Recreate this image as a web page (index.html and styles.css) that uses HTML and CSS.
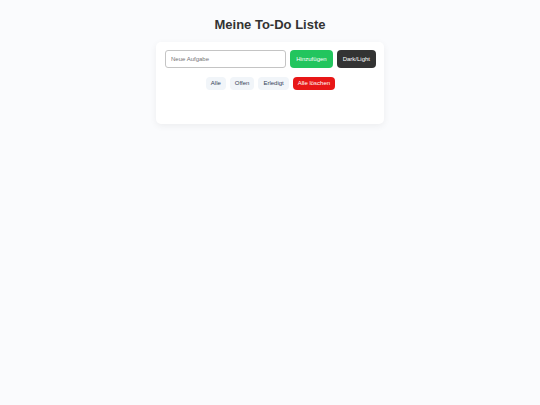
FILE: index.html
```html
<!DOCTYPE html>
<html lang="de">
<head>
<meta charset="utf-8">
<meta name="viewport" content="width=device-width, initial-scale=1">
<title>Meine To-Do Liste</title>
<link rel="stylesheet" href="styles.css">
</head>
<body>
<h1 class="title">Meine To-Do Liste</h1>
<main class="card">
  <form class="entry">
    <input class="entry-input" type="text" placeholder="Neue Aufgabe" aria-label="Neue Aufgabe">
    <button class="button add" type="submit">Hinzufügen</button>
    <button class="button theme" type="button">Dark/Light</button>
  </form>
  <div class="filters">
    <button class="filter" type="button">Alle</button>
    <button class="filter" type="button">Offen</button>
    <button class="filter" type="button">Erledigt</button>
    <button class="filter clear" type="button">Alle löschen</button>
  </div>
  <ul class="tasks"></ul>
</main>
</body>
</html>
```
FILE: styles.css
```css
* {
  box-sizing: border-box;
}

body {
  margin: 0;
  padding: 17px 16px;
  background: #fafbfd;
  color: #333;
  font-family: "Liberation Sans", Arial, sans-serif;
}

.title {
  margin: 0 0 9px;
  font-size: 13px;
  line-height: 16px;
  text-align: center;
}

.card {
  max-width: 228px;
  margin: 0 auto;
  padding: 8px 8px 34px 9px;
  border-radius: 5px;
  background: #fff;
  box-shadow: 0 2px 7px rgba(0, 0, 0, 0.06);
}

.entry {
  display: flex;
  gap: 4px;
  margin-bottom: 9px;
}

button,
input {
  font-family: inherit;
  font-size: 6px;
  line-height: 7px;
}

.entry-input {
  flex: 1;
  min-width: 0;
  height: 18px;
  padding: 0 5px;
  border: 1px solid #c4c4c4;
  border-radius: 3px;
  color: #333;
}

.entry-input::placeholder {
  color: #757575;
}

.button {
  height: 18px;
  padding: 0 6px;
  border: 0;
  border-radius: 4px;
  color: #fff;
}

.add {
  background: #22c55e;
}

.theme {
  background: #333;
}

.filters {
  display: flex;
  justify-content: center;
  gap: 4px;
}

.filter {
  height: 13px;
  padding: 0 5px;
  border: 0;
  border-radius: 4px;
  background: #f1f5f9;
  color: #334155;
}

.clear {
  background: #e81717;
  color: #fff;
}

.tasks {
  margin: 0;
  padding: 0;
  list-style: none;
}
```
